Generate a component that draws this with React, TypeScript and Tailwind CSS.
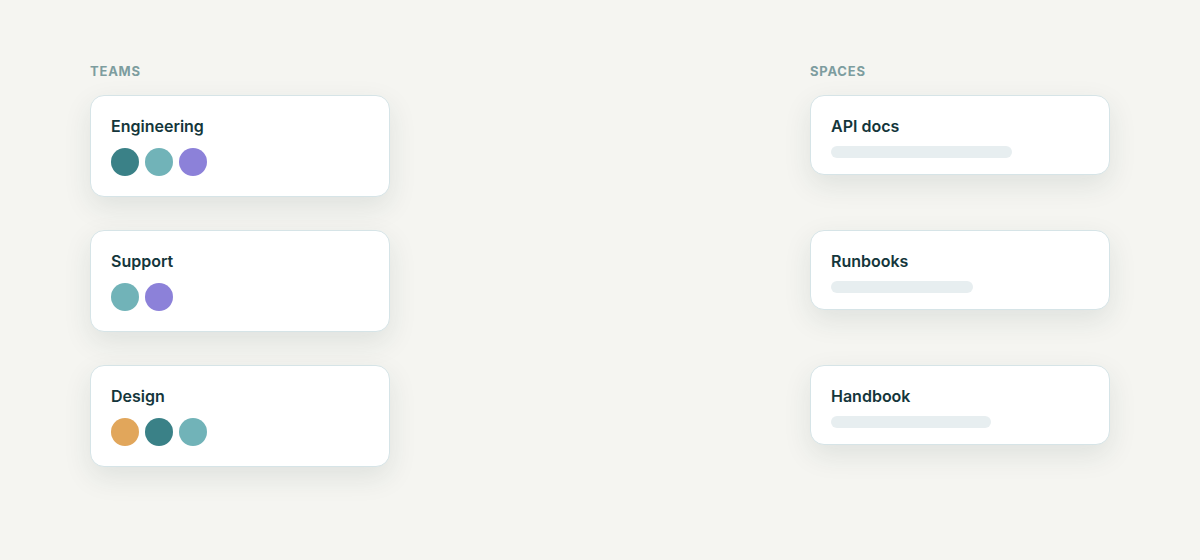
import { FC } from "react";

type Team = { name: string; members: string[] };
type Space = { name: string; bar: number };

const teams: Team[] = [
    { name: "Engineering", members: ["#3a8187", "#71b3b8", "#8c81d9"] },
    { name: "Support", members: ["#71b3b8", "#8c81d9"] },
    { name: "Design", members: ["#e1a65b", "#3a8187", "#71b3b8"] },
];

const spaces: Space[] = [
    { name: "API docs", bar: 181 },
    { name: "Runbooks", bar: 142 },
    { name: "Handbook", bar: 160 },
];

const cardClass =
    "w-[300px] rounded-[14px] border border-[#d6e4e7] bg-white px-5 pt-5 shadow-[0_10px_28px_rgba(30,60,60,0.10)]";

const Label: FC<{ text: string }> = ({ text }) => (
    <div className="mb-4 text-[13px] leading-4 font-bold tracking-[0.06em] text-[#7d9d9f]">
        {text}
    </div>
);

const App: FC = () => {
    return (
        <div
            className="flex h-[560px] w-[1200px] justify-between bg-[#f5f5f1] px-[90px] pt-[63px]"
            style={{ fontFamily: "Inter, 'Noto Sans', sans-serif" }}
        >
            <div className="flex flex-col">
                <Label text="TEAMS" />
                <div className="flex flex-col gap-[33px]">
                    {teams.map((team) => (
                        <div key={team.name} className={`${cardClass} pb-5`}>
                            <div className="text-base leading-5 font-semibold text-[#14363b]">{team.name}</div>
                            <div className="mt-3 flex gap-1.5">
                                {team.members.map((c, i) => (
                                    <span key={i} className="h-7 w-7 rounded-full" style={{ backgroundColor: c }} />
                                ))}
                            </div>
                        </div>
                    ))}
                </div>
            </div>

            <div className="flex flex-col">
                <Label text="SPACES" />
                <div className="flex flex-col gap-[55px]">
                    {spaces.map((space) => (
                        <div key={space.name} className={`${cardClass} pb-4`}>
                            <div className="text-base leading-5 font-semibold text-[#14363b]">{space.name}</div>
                            <div className="mt-2.5 h-3 rounded-full bg-[#e7eef0]" style={{ width: space.bar }} />
                        </div>
                    ))}
                </div>
            </div>
        </div>
    );
};

export default App;
